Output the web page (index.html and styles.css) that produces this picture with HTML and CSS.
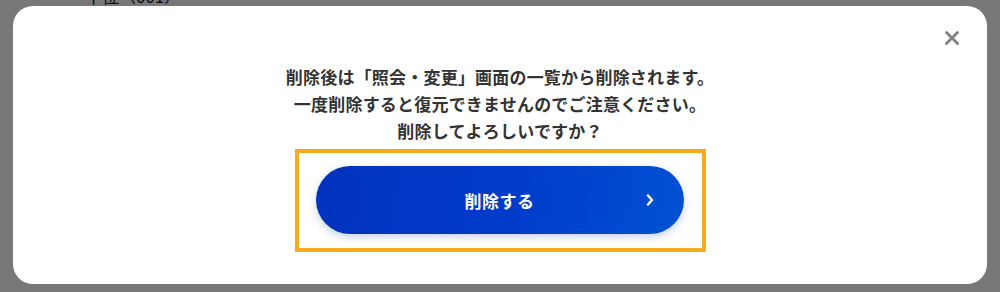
FILE: index.html
```html
<!DOCTYPE html>
<html>
<head>
    <meta charset="utf-8">
    <link rel="stylesheet" href="styles.css">
</head>
<body>
    <!-- Page behind the dialog -->
    <div class="page">
        <p class="page-label">十位（001）</p>
        <div class="page-rule"></div>
    </div>

    <!-- Delete confirmation dialog -->
    <div class="overlay">
        <div class="modal">
            <button class="close" aria-label="閉じる">
                <svg width="14" height="14" viewBox="0 0 14 14">
                    <path d="M1.5 1.5 L12.5 12.5 M12.5 1.5 L1.5 12.5" stroke="#7f7f7f" stroke-width="2.8" stroke-linecap="round"/>
                </svg>
            </button>
            <p class="message">
                削除後は「照会・変更」画面の一覧から削除されます。<br>
                一度削除すると復元できませんのでご注意ください。<br>
                削除してよろしいですか？
            </p>
            <div class="focus-frame">
                <button class="delete-button">
                    <span class="label">削除する</span>
                    <svg class="chevron" width="8" height="12" viewBox="0 0 8 12">
                        <path d="M2 1.5 L6 6 L2 10.5" fill="none" stroke="white" stroke-width="2.4" stroke-linecap="round" stroke-linejoin="round"/>
                    </svg>
                </button>
            </div>
        </div>
    </div>
</body>
</html>
```

FILE: styles.css
```css
body {
    margin: 0;
    padding: 0;
    font-family: "Noto Sans CJK JP", "Noto Sans", sans-serif;
    background-color: white;
    overflow: hidden;
}

.page {
    height: 292px;
    padding-left: 85px;
}

.page-label {
    margin: -15px 0 0;
    font-size: 17px;
    line-height: 22px;
    color: #222;
}

.page-rule {
    margin: 270px 0 0 -6px;
    width: 0;
    height: 20px;
    border-left: 1px dashed #333;
}

.overlay {
    position: fixed;
    inset: 0;
    background-color: rgba(0, 0, 0, 0.53);
    padding: 6px 13px 8px;
    box-sizing: border-box;
}

.modal {
    height: 100%;
    background-color: white;
    border-radius: 20px;
    box-sizing: border-box;
    padding-top: 57px;
    display: flex;
    flex-direction: column;
    align-items: center;
}

.close {
    all: unset;
    position: absolute;
    top: 31px;
    right: 41px;
    width: 14px;
    height: 14px;
    cursor: pointer;
}

.close svg {
    display: block;
}

.message {
    margin: 0 0 5px;
    font-size: 17px;
    font-weight: 700;
    line-height: 27px;
    color: #333;
    text-align: center;
    letter-spacing: 0.2px;
}

.focus-frame {
    border: 4px solid #f5ab1c;
    padding: 13px 18px 14px 17px;
}

.delete-button {
    all: unset;
    width: 368px;
    height: 68px;
    border-radius: 34px;
    background: linear-gradient(100deg, #0032bd 0%, #003ccb 55%, #0052d2 100%);
    box-shadow: 0 3px 8px rgba(0, 40, 160, 0.22);
    display: flex;
    align-items: center;
    justify-content: center;
    position: relative;
    cursor: pointer;
}

.label {
    color: white;
    font-size: 17px;
    font-weight: 700;
    letter-spacing: 0.5px;
}

.chevron {
    position: absolute;
    right: 30px;
    top: 28px;
}
```
